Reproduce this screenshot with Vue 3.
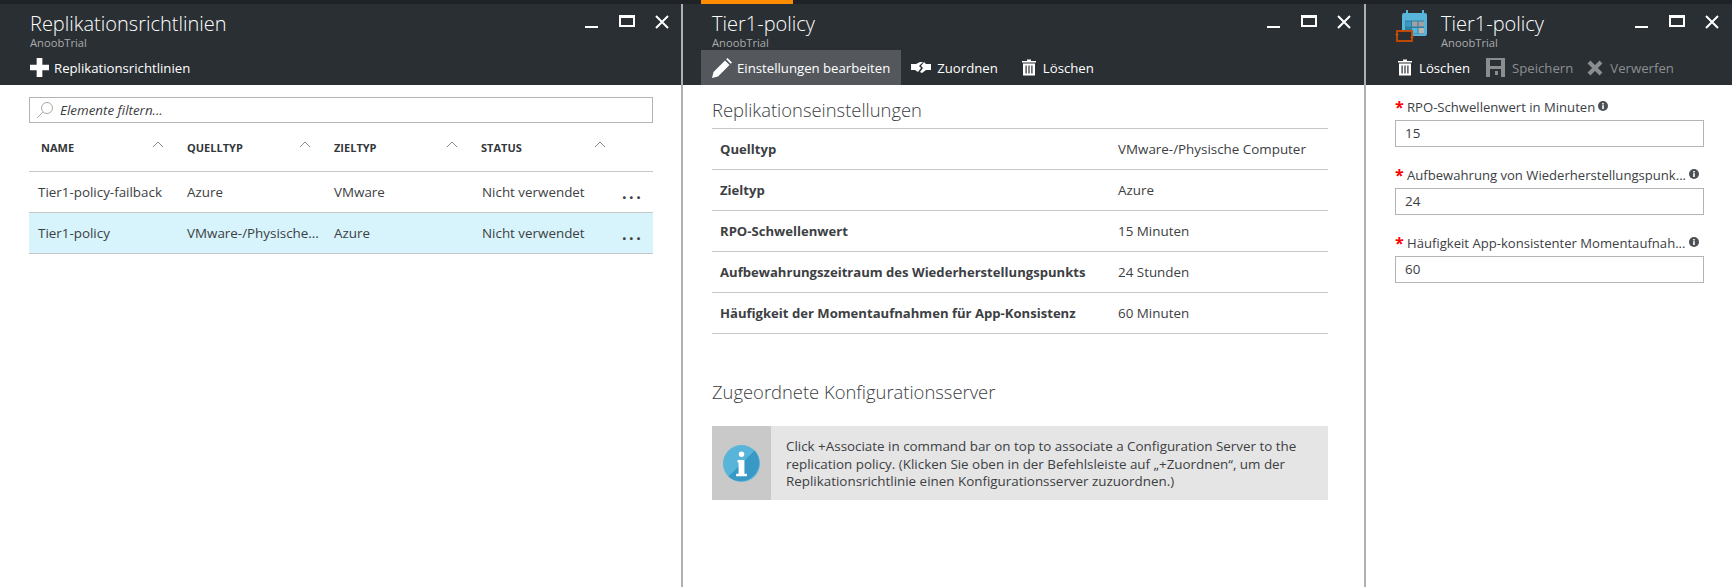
<template>
  <div class="page">
    <section class="blade blade-list">
      <header class="head">
        <div class="title-row">
          <div class="titles">
            <div class="title">Replikationsrichtlinien</div>
            <div class="sub">AnoobTrial</div>
          </div>
          <div class="controls">
            <svg class="ctl" viewBox="0 0 16 16"><rect x="1" y="12" width="13" height="2" fill="#fff" /></svg>
            <svg class="ctl" viewBox="0 0 16 16"><path d="M0 1h16v12H0zM2 4v7h12V4z" fill="#fff" fill-rule="evenodd" /></svg>
            <svg class="ctl" viewBox="0 0 16 16"><path d="M2 2l12 12M14 2L2 14" stroke="#fff" stroke-width="2" /></svg>
          </div>
        </div>
        <div class="cmds">
          <div class="cmd">
            <svg class="ico-plus" viewBox="0 0 20 20"><path d="M7 0h6v7h7v6h-7v7H7v-7H0V7h7z" fill="#fff" /></svg>
            <span>Replikationsrichtlinien</span>
          </div>
        </div>
      </header>
      <div class="list-body">
        <div class="filter">
          <svg class="glass" viewBox="0 0 18 18"><circle cx="11" cy="7" r="5.5" fill="none" stroke="#a9a9a9" /><path d="M7 11l-6 6" stroke="#a9a9a9" /></svg>
          <span>Elemente filtern...</span>
        </div>
        <div class="table-head">
          <div v-for="c in columns" :key="c" class="th">
            <span>{{ c }}</span>
            <svg class="sort" viewBox="0 0 12 7"><path d="M1 6l5-5 5 5" fill="none" stroke="#8a8a8a" /></svg>
          </div>
        </div>
        <div v-for="r in rows" :key="r.name" class="tr" :class="{ selected: r.selected }">
          <div class="td">{{ r.name }}</div>
          <div class="td">{{ r.source }}</div>
          <div class="td">{{ r.target }}</div>
          <div class="td">{{ r.status }}</div>
          <div class="dots">...</div>
        </div>
      </div>
    </section>

    <section class="blade blade-detail">
      <div class="tab-mark"></div>
      <header class="head">
        <div class="title-row">
          <div class="titles">
            <div class="title">Tier1-policy</div>
            <div class="sub">AnoobTrial</div>
          </div>
          <div class="controls">
            <svg class="ctl" viewBox="0 0 16 16"><rect x="1" y="12" width="13" height="2" fill="#fff" /></svg>
            <svg class="ctl" viewBox="0 0 16 16"><path d="M0 1h16v12H0zM2 4v7h12V4z" fill="#fff" fill-rule="evenodd" /></svg>
            <svg class="ctl" viewBox="0 0 16 16"><path d="M2 2l12 12M14 2L2 14" stroke="#fff" stroke-width="2" /></svg>
          </div>
        </div>
        <div class="cmds">
          <div class="cmd cmd-active">
            <svg class="ico-pencil" viewBox="0 0 20 20"><path d="M0 20l1.500-6L13 2.500l4.500 4.500L6 18.500zM14.200 1.300L15.500 0 20 4.500 18.700 5.800z" fill="#fff" /></svg>
            <span>Einstellungen bearbeiten</span>
          </div>
          <div class="cmd cmd-assoc">
            <svg class="ico-assoc" viewBox="0 0 20 11"><path d="M0 2H5L9 0H12L8 4L10 6L7 10L4 8H0zM13 0L15 2H20V8H15L11 11L9 10L12 6L10 4z" fill="#fff" /></svg>
            <span>Zuordnen</span>
          </div>
          <div class="cmd cmd-delete">
            <svg class="ico-trash" viewBox="0 0 14 16"><path d="M5 0h4v1.500h5V3H0V1.500h5zM1 4h12v12H1zM3.500 6v8h1.200V6zM6.400 6v8h1.200V6zM9.300 6v8h1.200V6z" fill="#fff" fill-rule="evenodd" /></svg>
            <span>Löschen</span>
          </div>
        </div>
      </header>
      <div class="detail-body">
        <h2 class="section-title">Replikationseinstellungen</h2>
        <div class="props">
          <div v-for="p in props" :key="p.label" class="prop">
            <div class="prop-label">{{ p.label }}</div>
            <div class="prop-value">{{ p.value }}</div>
          </div>
        </div>
        <h2 class="section-title second">Zugeordnete Konfigurationsserver</h2>
        <div class="notice">
          <div class="notice-icon">
            <svg viewBox="0 0 38 38" width="37" height="37">
              <circle cx="19" cy="19" r="19" fill="#59b4d9" />
              <path d="M32.400 5.600A19 19 0 0 1 5.600 32.400z" fill="#3999c6" />
              <circle cx="19" cy="9.500" r="2.800" fill="#fff" />
              <path d="M15 15.500h7v14h2.500v2.500h-11v-2.500H16V18h-1z" fill="#fff" />
            </svg>
          </div>
          <div class="notice-text">
            Click +Associate in command bar on top to associate a Configuration Server to the replication policy. (Klicken Sie oben in der Befehlsleiste auf „+Zuordnen“, um der Replikationsrichtlinie einen Konfigurationsserver zuzuordnen.)
          </div>
        </div>
      </div>
    </section>

    <section class="blade blade-form">
      <header class="head">
        <div class="title-row form-title-row">
          <svg class="cal" viewBox="0 0 34 33">
            <rect x="7" y="3" width="25" height="23" rx="2" fill="#59b4d9" />
            <rect x="11" y="0" width="2" height="6" fill="#59b4d9" />
            <rect x="27" y="0" width="2" height="6" fill="#59b4d9" />
            <rect x="10" y="10.500" width="19" height="13.500" fill="#2f7fa3" />
            <rect x="10.500" y="11.500" width="5.500" height="5" fill="#3999c6" />
            <rect x="17" y="11.500" width="5.500" height="5" fill="#a0a1a2" />
            <rect x="23.500" y="11.500" width="5.500" height="5" fill="#a0a1a2" />
            <rect x="17" y="18" width="5.500" height="5.500" fill="#59b4d9" />
            <rect x="23.500" y="18" width="5.500" height="5.500" fill="#b8b8b8" />
            <rect x="2" y="21" width="15" height="10" fill="#2a2f33" stroke="#ce4b00" stroke-width="1.800" />
            <path d="M0 24h4l-2 2.500zM15 28h4l-2-2.500z" fill="#ce4b00" />
          </svg>
          <div class="titles">
            <div class="title">Tier1-policy</div>
            <div class="sub">AnoobTrial</div>
          </div>
          <div class="controls">
            <svg class="ctl" viewBox="0 0 16 16"><rect x="1" y="12" width="13" height="2" fill="#fff" /></svg>
            <svg class="ctl" viewBox="0 0 16 16"><path d="M0 1h16v12H0zM2 4v7h12V4z" fill="#fff" fill-rule="evenodd" /></svg>
            <svg class="ctl" viewBox="0 0 16 16"><path d="M2 2l12 12M14 2L2 14" stroke="#fff" stroke-width="2" /></svg>
          </div>
        </div>
        <div class="cmds form-cmds">
          <div class="cmd">
            <svg class="ico-trash" viewBox="0 0 14 16"><path d="M5 0h4v1.500h5V3H0V1.500h5zM1 4h12v12H1zM3.500 6v8h1.200V6zM6.400 6v8h1.200V6zM9.300 6v8h1.200V6z" fill="#fff" fill-rule="evenodd" /></svg>
            <span>Löschen</span>
          </div>
          <div class="cmd disabled">
            <svg class="ico-save" viewBox="0 0 19 19"><path d="M0 0h19v19H0zM4 2v6h11V2zM4 11v8h11v-8zM9 13h3v4H9z" fill="#8a8e91" fill-rule="evenodd" /></svg>
            <span>Speichern</span>
          </div>
          <div class="cmd disabled cmd-discard">
            <svg class="ico-x" viewBox="0 0 16 16"><path d="M2 2l12 12M14 2L2 14" stroke="#8a8e91" stroke-width="4" /></svg>
            <span>Verwerfen</span>
          </div>
        </div>
      </header>
      <div class="form-body">
        <div v-for="f in fields" :key="f.label" class="field">
          <div class="field-label">
            <span class="star">*</span>
            <span class="label-text">{{ f.label }}</span>
            <svg class="hint" viewBox="0 0 10 10"><circle cx="5" cy="5" r="5" fill="#4b5054" /><rect x="4.200" y="4.200" width="1.600" height="3.800" fill="#fff" /><rect x="4.200" y="2" width="1.600" height="1.500" fill="#fff" /></svg>
          </div>
          <div class="input">{{ f.value }}</div>
        </div>
      </div>
    </section>
  </div>
</template>

<script setup>
const columns = ['NAME', 'QUELLTYP', 'ZIELTYP', 'STATUS']

const rows = [
  { name: 'Tier1-policy-failback', source: 'Azure', target: 'VMware', status: 'Nicht verwendet' },
  { name: 'Tier1-policy', source: 'VMware-/Physische...', target: 'Azure', status: 'Nicht verwendet', selected: true }
]

const props = [
  { label: 'Quelltyp', value: 'VMware-/Physische Computer' },
  { label: 'Zieltyp', value: 'Azure' },
  { label: 'RPO-Schwellenwert', value: '15 Minuten' },
  { label: 'Aufbewahrungszeitraum des Wiederherstellungspunkts', value: '24 Stunden' },
  { label: 'Häufigkeit der Momentaufnahmen für App-Konsistenz', value: '60 Minuten' }
]

const fields = [
  { label: 'RPO-Schwellenwert in Minuten', value: '15' },
  { label: 'Aufbewahrung von Wiederherstellungspunk...', value: '24' },
  { label: 'Häufigkeit App-konsistenter Momentaufnah...', value: '60' }
]
</script>

<style>
html,
body {
  margin: 0;
  background: #fff;
}
</style>

<style scoped>
.page {
  display: flex;
  width: 1732px;
  height: 587px;
  overflow: hidden;
  padding-top: 4px;
  box-sizing: border-box;
  background: #1f2327;
  font-family: "Open Sans", "Noto Sans", sans-serif;
  font-size: 13.4px;
  color: #3c4043;
}

.blade {
  position: relative;
  display: flex;
  flex-direction: column;
  box-sizing: border-box;
  background: #fff;
}

.blade-list {
  width: 681px;
}

.blade-detail {
  width: 683px;
  border-left: 2px solid #b0b0b0;
}

.blade-form {
  width: 368px;
  border-left: 2px solid #b0b0b0;
}

/* orange marker for the selected blade */
.tab-mark {
  position: absolute;
  left: 18px;
  top: -4px;
  width: 92px;
  height: 4px;
  background: #ff8c00;
}

.head {
  height: 81px;
  flex: none;
  background: #2a2f33;
  color: #fff;
  box-sizing: border-box;
}

.title-row {
  display: flex;
  justify-content: space-between;
  height: 46px;
  padding: 8px 0 0 30px;
  box-sizing: border-box;
}

.blade-detail .title-row {
  padding-left: 29px;
}

.form-title-row {
  padding: 8px 0 0 29px;
}

.cal {
  flex: none;
  width: 34px;
  height: 33px;
  margin: -2px 12px 0 0;
}

.titles {
  flex: 1;
}

.title {
  font-size: 20px;
  font-weight: 300;
  line-height: 24px;
}

.sub {
  font-size: 11.200px;
  line-height: 14px;
  color: #a9abad;
}

.controls {
  display: flex;
  gap: 19px;
  padding: 2px 12px 0 0;
}

.blade-list .controls {
  padding-right: 11px;
}

.ctl {
  width: 16px;
  height: 16px;
}

.cmds {
  display: flex;
  height: 35px;
  padding-left: 18px;
}

.blade-list .cmds {
  padding-left: 30px;
}

.form-cmds {
  padding-left: 32px;
  gap: 16px;
}

.cmd {
  display: flex;
  align-items: center;
  gap: 5px;
  padding: 0 10px;
  font-size: 13.200px;
}

.blade-list .cmd,
.form-cmds .cmd {
  padding: 0;
}

.form-cmds .cmd {
  gap: 7px;
}

.form-cmds .cmd-discard {
  margin-left: -2px;
}

.cmd-active {
  padding: 0 11px;
  background: #54585d;
}

.cmd-assoc {
  gap: 6px;
}

.cmd-delete {
  margin-left: 4px;
  gap: 7px;
}

.disabled {
  color: #8a8e91;
}

.ico-plus {
  width: 19px;
  height: 19px;
}

.ico-pencil {
  width: 20px;
  height: 20px;
}

.ico-assoc {
  width: 20px;
  height: 11px;
}

.ico-trash {
  width: 14px;
  height: 17px;
}

.ico-save {
  width: 19px;
  height: 19px;
}

.ico-x {
  width: 16px;
  height: 16px;
}

.list-body {
  padding: 12px 28px 0 29px;
}

.filter {
  display: flex;
  align-items: center;
  gap: 6px;
  height: 26px;
  padding-left: 6px;
  border: 1px solid #b4b4b4;
  font-style: italic;
  box-sizing: border-box;
}

.glass {
  width: 18px;
  height: 18px;
}

.table-head,
.tr {
  display: grid;
  grid-template-columns: 149px 147px 147px 146px 1fr;
  align-items: center;
  border-bottom: 1px solid #c8c8c8;
  box-sizing: border-box;
}

.table-head {
  height: 49px;
}

.th {
  display: flex;
  justify-content: space-between;
  align-items: center;
  padding: 0 14px 0 12px;
  font-size: 11px;
  font-weight: 700;
  color: #33373a;
}

.th:nth-child(n + 2) {
  padding-left: 9px;
}

.th:last-child {
  padding-right: 12px;
}

.sort {
  width: 12px;
  height: 7px;
  margin-bottom: 6px;
}

.tr {
  height: 41px;
}

.selected {
  background: #d7f4fc;
}

.td {
  padding-left: 9px;
  white-space: nowrap;
}

.td:nth-child(4) {
  padding-left: 10px;
}

.dots {
  padding: 1px 0 0 4px;
  font-size: 16px;
  font-weight: 700;
  letter-spacing: 2.500px;
  line-height: 18px;
}

.detail-body {
  padding: 11px 36px 0 29px;
}

.section-title {
  margin: 0;
  font-size: 18.400px;
  font-weight: 300;
  line-height: 28px;
  padding-bottom: 4px;
}

.second {
  margin-top: 44px;
  padding-bottom: 0;
}

.props {
  border-top: 1px solid #c8c8c8;
}

.prop {
  display: flex;
  align-items: center;
  height: 41px;
  padding-left: 8px;
  border-bottom: 1px solid #c8c8c8;
  box-sizing: border-box;
}

.prop-label {
  width: 398px;
  font-size: 13.100px;
  font-weight: 700;
}

.notice {
  display: flex;
  height: 74px;
  margin-top: 20px;
  background: #e5e5e5;
}

.notice-icon {
  display: flex;
  align-items: center;
  justify-content: center;
  width: 59px;
  background: #c9c9c9;
}

.notice-text {
  flex: 1;
  padding: 12px 16px 0 15px;
  line-height: 17.500px;
}

.form-body {
  padding: 11px 28px 0 29px;
}

.field {
  margin-bottom: 17px;
}

.field-label {
  display: flex;
  align-items: center;
  height: 22px;
  padding-bottom: 2px;
  font-size: 13.100px;
}

.star {
  width: 12px;
  color: #f00;
  font-size: 16px;
  font-weight: 700;
}

.label-text {
  white-space: nowrap;
}

.hint {
  width: 10px;
  height: 10px;
  margin: 0 0 3px 3px;
}

.input {
  height: 27px;
  line-height: 25px;
  padding-left: 9px;
  border: 1px solid #b4b4b4;
  box-sizing: border-box;
}
</style>
